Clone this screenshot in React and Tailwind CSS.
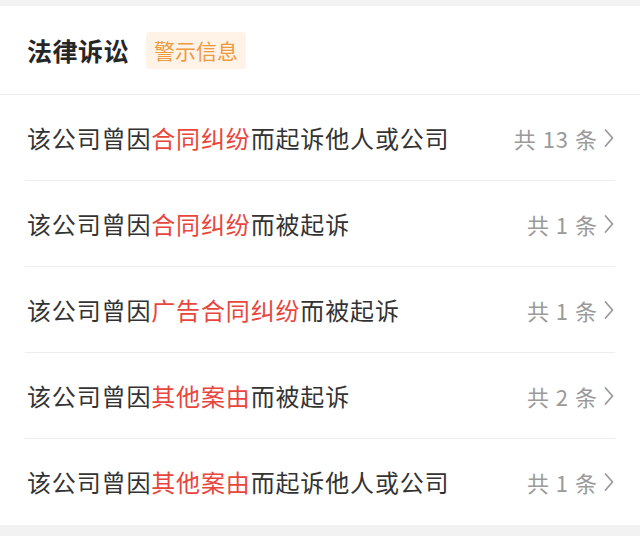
const rows = [
  { pre: '该公司曾因', hi: '合同纠纷', post: '而起诉他人或公司', count: 13 },
  { pre: '该公司曾因', hi: '合同纠纷', post: '而被起诉', count: 1 },
  { pre: '该公司曾因', hi: '广告合同纠纷', post: '而被起诉', count: 1 },
  { pre: '该公司曾因', hi: '其他案由', post: '而被起诉', count: 2 },
  { pre: '该公司曾因', hi: '其他案由', post: '而起诉他人或公司', count: 1 },
];

function Chevron() {
  return (
    <svg width="12" height="22" viewBox="0 0 12 22" fill="none" className="ml-[5px]">
      <path d="M2.5 3 L9.5 11 L2.5 19" stroke="#9a9a9a" strokeWidth="1.8" strokeLinecap="round" strokeLinejoin="round" />
    </svg>
  );
}

export default function App() {
  return (
    <div
      className="flex h-[536px] w-[640px] flex-col bg-[#f2f2f2] pt-[6px] pb-[12px]"
      style={{ fontFamily: '"Noto Sans CJK SC", "Noto Sans", sans-serif' }}
    >
      <div className="flex flex-1 flex-col bg-white">
        <div className="flex h-[89px] items-center border-b border-[#ececec] pl-[27px]">
          <h1 className="text-[25px] font-bold leading-none tracking-[0.5px] text-[#262626]">法律诉讼</h1>
          <span className="ml-[17px] rounded-[3px] bg-[#fef3e6] px-[8px] py-[8px] text-[21px] leading-none text-[#ee9a3f]">
            警示信息
          </span>
        </div>
        <div className="px-[25px]">
          {rows.map((r, i) => (
            <div
              key={i}
              className={`flex h-[86px] items-center justify-between pl-[2px] ${i < rows.length - 1 ? 'border-b border-[#ededed]' : ''}`}
            >
              <p className="text-[24px] leading-none tracking-[0.85px] text-[#333333]">
                {r.pre}
                <span className="text-[#e8463d]">{r.hi}</span>
                {r.post}
              </p>
              <div className="flex items-center text-[22px] leading-none tracking-[1px] text-[#9a9a9a]">
                <span className="whitespace-pre">共 {r.count} 条</span>
                <Chevron />
              </div>
            </div>
          ))}
        </div>
      </div>
    </div>
  );
}
